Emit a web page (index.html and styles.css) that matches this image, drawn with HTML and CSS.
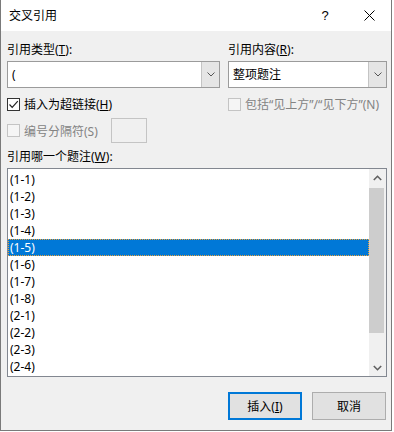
FILE: index.html
```html
<!DOCTYPE html>
<html lang="zh-CN">
<head>
<meta charset="utf-8">
<title>交叉引用</title>
<link rel="stylesheet" href="styles.css">
</head>
<body>
<div class="window">
  <div class="titlebar">
    <span class="title">交叉引用</span>
    <span class="tbtn help">?</span>
    <span class="tbtn close">
      <svg width="11" height="11" viewBox="0 0 11 11"><path d="M0.5 0.5 L10.5 10.5 M10.5 0.5 L0.5 10.5" stroke="#000" stroke-width="1" fill="none"/></svg>
    </span>
  </div>
  <div class="content">
    <div class="top-grid">
      <div class="label">引用类型(<u>T</u>):</div>
      <div class="label">引用内容(<u>R</u>):</div>

      <div class="combo">
        <span class="combo-text">(</span>
        <span class="combo-btn"><svg width="8" height="5" viewBox="0 0 8 5"><path d="M0.5 0.5 L4 4 L7.5 0.5" stroke="#555" stroke-width="1" fill="none"/></svg></span>
      </div>
      <div class="combo">
        <span class="combo-text">整项题注</span>
        <span class="combo-btn"><svg width="8" height="5" viewBox="0 0 8 5"><path d="M0.5 0.5 L4 4 L7.5 0.5" stroke="#555" stroke-width="1" fill="none"/></svg></span>
      </div>

      <div class="check-row">
        <span class="box checked"><svg width="11" height="11" viewBox="0 0 11 11"><path d="M1.5 5.5 L4.2 8.3 L9.8 2.2" stroke="#222" stroke-width="1.2" fill="none"/></svg></span>
        <span>插入为超链接(<u>H</u>)</span>
      </div>
      <div class="check-row disabled">
        <span class="box"></span>
        <span>包括“见上方”/“见下方”(N)</span>
      </div>

      <div class="sep-row disabled">
        <span class="box"></span>
        <span>编号分隔符(S)</span>
        <span class="sep-input"></span>
      </div>
      <div></div>
    </div>

    <div class="label which">引用哪一个题注(<u>W</u>):</div>

    <div class="listbox">
      <div class="items">
        <div class="item">(1-1)</div>
        <div class="item">(1-2)</div>
        <div class="item">(1-3)</div>
        <div class="item">(1-4)</div>
        <div class="item selected">(1-5)</div>
        <div class="item">(1-6)</div>
        <div class="item">(1-7)</div>
        <div class="item">(1-8)</div>
        <div class="item">(2-1)</div>
        <div class="item">(2-2)</div>
        <div class="item">(2-3)</div>
        <div class="item">(2-4)</div>
      </div>
      <div class="scrollbar">
        <div class="sb-btn"><svg width="9" height="6" viewBox="0 0 9 6"><path d="M0.8 5 L4.5 1.3 L8.2 5" stroke="#606060" stroke-width="1.6" fill="none"/></svg></div>
        <div class="sb-track"><div class="sb-thumb"></div></div>
        <div class="sb-btn"><svg width="9" height="6" viewBox="0 0 9 6"><path d="M0.8 1 L4.5 4.7 L8.2 1" stroke="#606060" stroke-width="1.6" fill="none"/></svg></div>
      </div>
    </div>

    <div class="buttons">
      <div class="btn default">插入(<u>I</u>)</div>
      <div class="btn">取消</div>
    </div>
  </div>
</div>
</body>
</html>
```
FILE: styles.css
```css
html, body {
  margin: 0;
  padding: 0;
  background: #ffffff;
}
body {
  font-family: "Noto Sans", "Noto Sans CJK SC", sans-serif;
  font-size: 12px;
  color: #000;
}
u {
  text-decoration: underline;
  text-underline-offset: 1px;
}
.window {
  width: 392px;
  height: 431px;
  box-sizing: border-box;
  border-left: 1px solid #7a7a7a;
  border-right: 1px solid #7a7a7a;
  border-bottom: 1px solid #7a7a7a;
  display: flex;
  flex-direction: column;
  background: #f0f0f0;
}
.titlebar {
  height: 31px;
  background: #fff;
  display: flex;
  align-items: center;
  flex: none;
}
.title {
  flex: 1;
  padding-left: 8px;
  line-height: 17px;
}
.tbtn {
  width: 44px;
  height: 31px;
  display: flex;
  align-items: center;
  justify-content: center;
}
.help {
  font-size: 13px;
  font-family: "Liberation Sans", sans-serif;
}
.content {
  flex: 1;
  padding: 10px 4px 0 6px;
}
.top-grid {
  display: grid;
  grid-template-columns: 213px 159px;
  column-gap: 8px;
}
.label {
  line-height: 17px;
  height: 17px;
  white-space: nowrap;
}
.combo {
  margin-top: 3px;
  height: 27px;
  box-sizing: border-box;
  border: 1px solid #9b9b9b;
  background: #fff;
  display: flex;
  align-items: stretch;
}
.combo-text {
  flex: 1;
  padding-left: 4px;
  line-height: 25px;
}
.combo-btn {
  width: 17px;
  background: #e5e5e5;
  border-left: 1px solid #c4c4c4;
  display: flex;
  align-items: center;
  justify-content: center;
}
.check-row {
  margin-top: 8px;
  height: 17px;
  line-height: 17px;
  display: flex;
  align-items: center;
  gap: 4px;
  white-space: nowrap;
}
.box {
  width: 13px;
  height: 13px;
  box-sizing: border-box;
  border: 1px solid #c4c4c4;
  background: #f5f5f5;
  display: flex;
  align-items: center;
  justify-content: center;
  flex: none;
}
.box.checked {
  border-color: #333;
  background: #fff;
}
.disabled {
  color: #838383;
}
.sep-row {
  margin-top: 5px;
  height: 25px;
  display: flex;
  align-items: center;
  gap: 4px;
  white-space: nowrap;
}
.sep-input {
  margin-left: 9px;
  width: 36px;
  height: 25px;
  box-sizing: border-box;
  border: 1px solid #c4c4c4;
  background: #f0f0f0;
}
.which {
  margin-top: 5px;
}
.listbox {
  margin-top: 3px;
  height: 209px;
  box-sizing: border-box;
  border: 1px solid #828790;
  background: #fff;
  display: flex;
}
.items {
  flex: 1;
  padding-top: 2px;
}
.item {
  height: 17px;
  line-height: 17px;
  padding-left: 2px;
}
.item.selected {
  background: #0078d7;
  color: #fff;
  outline: 1px dotted #e9a13b;
  outline-offset: -1px;
}
.scrollbar {
  width: 17px;
  background: #f0f0f0;
  display: flex;
  flex-direction: column;
}
.sb-btn {
  height: 17px;
  display: flex;
  align-items: center;
  justify-content: center;
  flex: none;
}
.sb-track {
  flex: 1;
  padding-top: 2px;
}
.sb-thumb {
  height: 145px;
  margin: 0 2px 0 0;
  background: #cdcdcd;
}
.buttons {
  margin-top: 15px;
  display: flex;
  justify-content: flex-end;
  gap: 10px;
  padding-right: 1px;
}
.btn {
  width: 74px;
  height: 28px;
  box-sizing: border-box;
  border: 1px solid #adadad;
  background: #e1e1e1;
  display: flex;
  align-items: center;
  justify-content: center;
  line-height: 17px;
}
.btn.default {
  border: 2px solid #0078d7;
}
```
